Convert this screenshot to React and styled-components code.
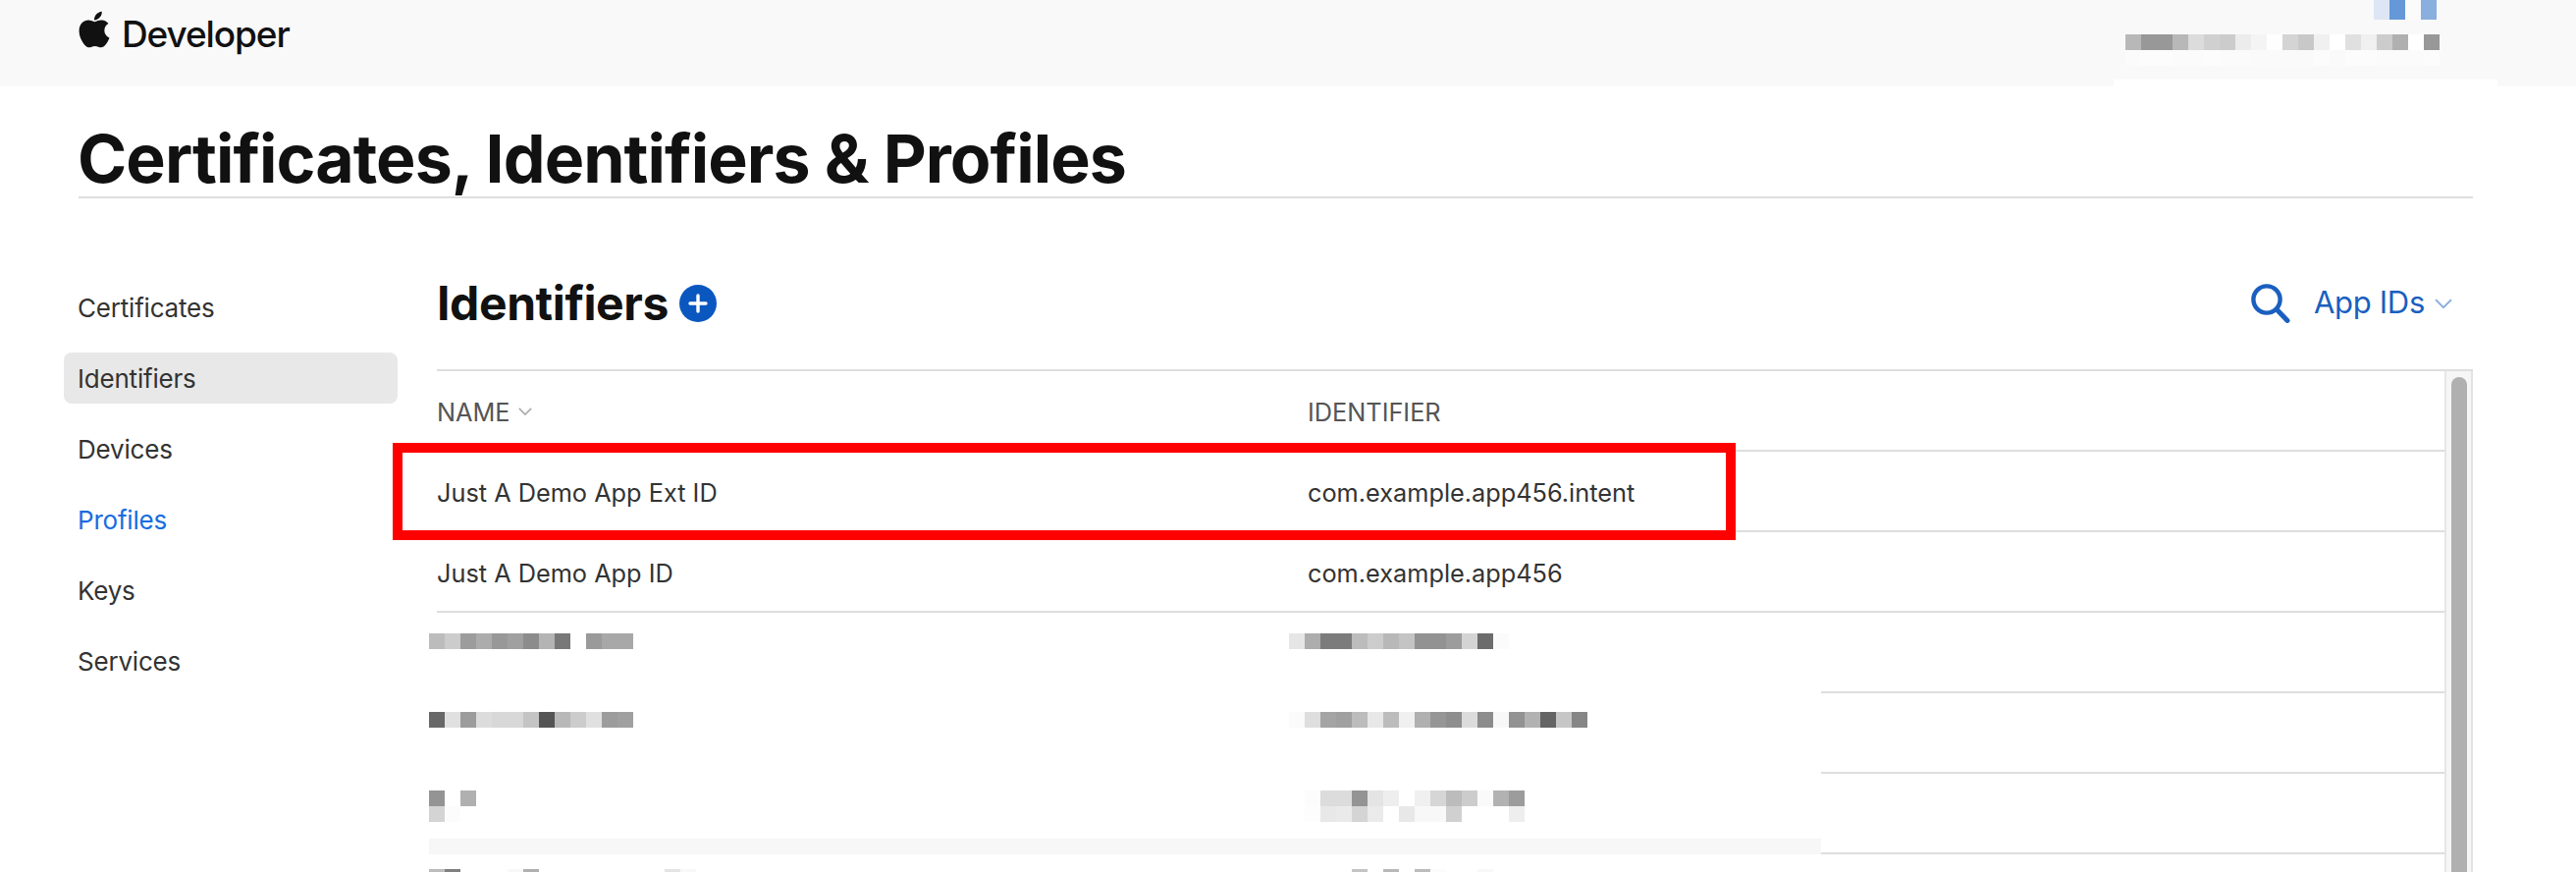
import styled, { createGlobalStyle } from 'styled-components';
import { FaApple } from 'react-icons/fa';

const GlobalStyle = createGlobalStyle`
  html, body {
    margin: 0;
    background: #fff;
    font-family: Inter, "Liberation Sans", sans-serif;
  }
`;

const Page = styled.div`
  height: 888px;
  overflow: hidden;
`;

const Header = styled.header`
  position: relative;
  height: 88px;
  background: #f9f9f9;
  display: flex;
  justify-content: space-between;
  padding: 0 80px;
`;

const Brand = styled.div`
  display: flex;
  align-items: flex-start;
  gap: 7px;
  padding-top: 9px;
  margin-left: -5px;
  color: #111;
`;

const BrandName = styled.span`
  font-size: 37px;
  line-height: 52px;
  font-weight: 500;
  letter-spacing: -1.1px;
`;

const Account = styled.div`
  display: flex;
  flex-direction: column;
  width: 379px;
`;

const AccountBadge = styled.div`
  display: flex;
  height: 20px;
  margin: 0 0 15px 253px;
`;

const HeaderNotch = styled.div`
  position: absolute;
  left: 2153px;
  bottom: 0;
  width: 391px;
  height: 7px;
  background: #fff;
`;

const Strip = styled.div`
  display: flex;
  flex-direction: column;
  flex: none;
  margin-left: ${(props) => props.$left}px;
  padding-top: ${(props) => props.$top || 0}px;
  filter: blur(0.5px);
`;

const StripLine = styled.div`
  display: flex;
`;

const Cell = styled.span`
  width: 16px;
  height: ${(props) => props.$height || 16}px;
  background: ${(props) => props.$tone};
`;

const Main = styled.main`
  padding: 0 105px 0 80px;
`;

const TitleBar = styled.div`
  height: 114px;
  box-sizing: border-box;
  padding-top: 34px;
  border-bottom: 2px solid #dedede;
  display: flex;
  align-items: center;
`;

const Title = styled.h1`
  margin: 0 0 0 -1px;
  font-size: 68px;
  line-height: 76px;
  font-weight: 700;
  color: #111;
  letter-spacing: -0.95px;
  white-space: nowrap;
`;

const Columns = styled.div`
  display: flex;
  padding-top: 85px;
`;

const Sidebar = styled.nav`
  width: 340px;
  margin: 0 40px 0 -15px;
  display: flex;
  flex-direction: column;
  gap: 20px;
  flex: none;
`;

const NavItem = styled.div`
  height: 52px;
  padding-left: 14px;
  border-radius: 8px;
  display: flex;
  align-items: center;
  font-size: 26px;
  letter-spacing: -0.2px;
  color: ${(props) => (props.$link ? '#1a6ce0' : '#333')};
  background: ${(props) => (props.$active ? '#e8e8e8' : 'transparent')};
`;

const Content = styled.section`
  flex: 1;
  min-width: 0;
`;

const Toolbar = styled.div`
  height: 44px;
  margin-bottom: 45px;
  display: flex;
  align-items: center;
  justify-content: space-between;
`;

const HeadingGroup = styled.div`
  display: flex;
  align-items: center;
  gap: 11px;
`;

const Heading = styled.h2`
  margin: 0;
  font-size: 48px;
  line-height: 44px;
  font-weight: 700;
  color: #111;
  letter-spacing: -0.4px;
`;

const ToolGroup = styled.div`
  display: flex;
  align-items: center;
  padding-right: 21px;
  color: #1a5fbf;
`;

const FilterLabel = styled.span`
  margin: -3px 10px 0 24px;
  font-size: 31px;
  letter-spacing: -0.3px;
`;

const TableFrame = styled.div`
  display: flex;
  border-top: 2px solid #dedede;
`;

const Rows = styled.div`
  flex: 1;
  min-width: 0;
`;

const Row = styled.div`
  position: relative;
  box-sizing: border-box;
  height: 82px;
  padding-top: ${(props) => (props.$masked ? 0 : 2)}px;
  display: grid;
  grid-template-columns: 887px 1fr;
  align-items: ${(props) => (props.$masked ? 'start' : 'center')};
  font-size: 25.3px;
  color: ${(props) => (props.$head ? '#555' : '#333')};
  border-bottom: ${(props) => (props.$masked ? 'none' : '2px solid #dedede')};
  background: ${(props) =>
    props.$masked
      ? 'linear-gradient(#dedede, #dedede) no-repeat right bottom / 635px 2px'
      : 'none'};
`;

const HeadCell = styled.div`
  display: flex;
  align-items: center;
  gap: 8px;
`;

const Band = styled.div`
  position: absolute;
  left: -8px;
  bottom: 0;
  width: 1418px;
  height: 16px;
  background: #f7f7f7;
`;

const Callout = styled.div`
  position: absolute;
  left: -45px;
  top: -9px;
  width: 1368px;
  height: 99px;
  box-sizing: border-box;
  border: 10px solid #ff0000;
  pointer-events: none;
`;

const ScrollTrack = styled.div`
  width: 29px;
  box-sizing: border-box;
  flex: none;
  background: #f6f6f6;
  border-left: 2px solid #e6e6e6;
  border-right: 2px solid #e2e2e2;
  padding: 6px 4px 0 5px;
`;

const ScrollThumb = styled.div`
  height: 600px;
  background: #b0b0b0;
  border-radius: 8px;
`;

function Pixels({ lines, left = 0, top = 0, height }) {
  return (
    <Strip $left={left} $top={top}>
      {lines.map((line, i) => (
        <StripLine key={i}>
          {line.map((tone, j) => (
            <Cell key={j} $tone={tone} $height={height} />
          ))}
        </StripLine>
      ))}
    </Strip>
  );
}

const g = (v) => `#${v}${v}${v}`;
const tones = (str) => str.split(' ').map(g);

const maskedRows = [
  {
    top: 21,
    name: ['bc cc 9c ac 98 a0 8c b4 78 ff 9a a8 a8'],
    id: ['e6 ad 7c 7c bc cc b8 c4 92 92 9c d4 6c fb']
  },
  {
    top: 19,
    name: ['68 e0 9c dc d8 d8 c4 54 b8 cc e0 9c a0'],
    id: ['fb de a4 a0 bc e8 bc f0 b0 96 8e dc 8c f8 92 b2 64 c6 86']
  },
  {
    top: 17,
    band: true,
    name: ['94 ff b0', 'd4 fc ff'],
    id: [
      'ff fc dc dc 94 e4 ee ff f0 d6 bc cc fa b2 9c',
      'ff fd e8 ea d4 ea ff e8 f8 f8 d0 ff ff ff ee'
    ]
  },
  {
    top: 15,
    name: ['bc 80 ff ff ff f8 b0 ff ff ff ff ff ff ff ff e4 f8'],
    id: ['ff ff ff ff c4 ff b8 ff bc fc ff ff f8']
  }
];

function PlusBadge() {
  return (
    <svg width="38" height="38" viewBox="0 0 38 38">
      <circle cx="19" cy="19" r="19" fill="#0b57c0" />
      <path d="M19 11v16M11 19h16" stroke="#fff" strokeWidth="3.4" strokeLinecap="round" />
    </svg>
  );
}

function SearchIcon() {
  return (
    <svg width="40" height="40" viewBox="0 0 40 40" fill="none" stroke="currentColor" strokeWidth="4.4">
      <circle cx="16" cy="16" r="13.6" />
      <path d="M26 26l11 11.4" strokeLinecap="round" strokeWidth="5" />
    </svg>
  );
}

function Chevron({ size, color }) {
  return (
    <svg width={size} height={size * 0.6} viewBox="0 0 17 10" fill="none" stroke={color} strokeWidth="1.9">
      <path d="M1 1l7.5 7.5L16 1" />
    </svg>
  );
}

export default function App() {
  return (
    <Page>
      <GlobalStyle />
      <Header>
        <Brand>
          <FaApple size={42} />
          <BrandName>Developer</BrandName>
        </Brand>
        <Account>
          <AccountBadge>
            <Pixels
              height={20}
              lines={[['#dce6f4', '#6598d6', '#fbfbfb', '#8aaedd']]}
            />
          </AccountBadge>
          <Pixels
            lines={[
              tones('b8 98 98 b8 dc d0 cc ec f4 fe d4 c8 f0 ff e0 f0 cc b0 ff 98'),
              tones('fb fc fc fb fb fc fb fb fa fa fa fa fc fa fc fc fb fb fb fc')
            ]}
          />
        </Account>
        <HeaderNotch />
      </Header>
      <Main>
        <TitleBar>
          <Title>Certificates, Identifiers &amp; Profiles</Title>
        </TitleBar>
        <Columns>
          <Sidebar>
            <NavItem>Certificates</NavItem>
            <NavItem $active>Identifiers</NavItem>
            <NavItem>Devices</NavItem>
            <NavItem $link>Profiles</NavItem>
            <NavItem>Keys</NavItem>
            <NavItem>Services</NavItem>
          </Sidebar>
          <Content>
            <Toolbar>
              <HeadingGroup>
                <Heading>Identifiers</Heading>
                <PlusBadge />
              </HeadingGroup>
              <ToolGroup>
                <SearchIcon />
                <FilterLabel>App IDs</FilterLabel>
                <Chevron size={18} color="#8aaedd" />
              </ToolGroup>
            </Toolbar>
            <TableFrame>
              <Rows>
                <Row $head>
                  <HeadCell>
                    NAME
                    <Chevron size={14} color="#aaa" />
                  </HeadCell>
                  <HeadCell>IDENTIFIER</HeadCell>
                </Row>
                <Row>
                  <div>Just A Demo App Ext ID</div>
                  <div>com.example.app456.intent</div>
                  <Callout />
                </Row>
                <Row>
                  <div>Just A Demo App ID</div>
                  <div>com.example.app456</div>
                </Row>
                {maskedRows.map((row, i) => (
                  <Row key={i} $masked>
                    <Pixels left={-8} top={row.top} lines={row.name.map(tones)} />
                    <Pixels left={-19} top={row.top} lines={row.id.map(tones)} />
                    {row.band && <Band />}
                  </Row>
                ))}
              </Rows>
              <ScrollTrack>
                <ScrollThumb />
              </ScrollTrack>
            </TableFrame>
          </Content>
        </Columns>
      </Main>
    </Page>
  );
}
